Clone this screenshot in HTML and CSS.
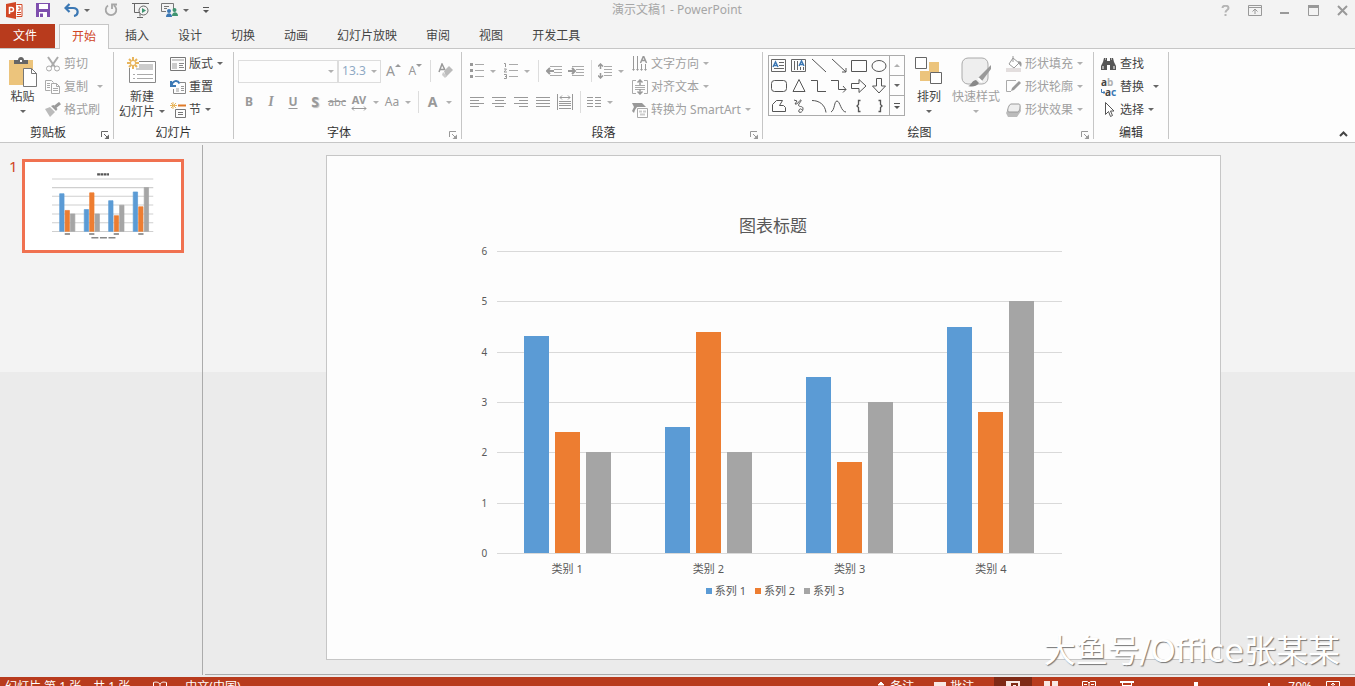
FILE: index.html
```html
<!DOCTYPE html>
<html lang="zh-CN">
<head>
  <meta charset="UTF-8" />
  <meta name="viewport" content="width=device-width, initial-scale=1.0"/>
  <title>演示文稿1 - PowerPoint</title>
  <link rel="stylesheet" href="styles.css">
</head>
<body>

  <!-- Title bar -->
  <header class="title-bar">
    <div class="quick-access">
      <svg class="logo" width="17" height="17" viewBox="0 0 17 17"><path d="M0 2l10-2v17L0 15z" fill="#d24726"/><path d="M10.500 2.500h5.500v12h-5.500" fill="#fff" stroke="#d24726"/><path d="M12 5h2v3h-2M11 10.500h4M11 12.500h4" fill="none" stroke="#d24726"/><path d="M3.500 12V5.500h2a1.800 1.800 0 010 4h-2" fill="none" stroke="#fff" stroke-width="1.500"/></svg>
      <button class="save" aria-label="保存"><svg width="14" height="14" viewBox="0 0 14 14"><path d="M0 0h14v14H0z" fill="#7e4fae"/><path d="M3 1h9v5H3zM3 9h8v5H3z" fill="#fff"/><path d="M4 10.500h3V14H4z" fill="#7e4fae"/></svg></button>
      <button class="undo" aria-label="撤消"><svg width="15" height="14" viewBox="0 0 15 14"><path d="M5.500 1L1.500 5l4 4M2 5h7c6 0 6 7 1 8" fill="none" stroke="#3c78b4" stroke-width="2.200"/></svg><i class="arrow dark"></i></button>
      <button class="redo" aria-label="重复"><svg width="14" height="14" viewBox="0 0 14 14"><path d="M4 2.500a5.300 5.300 0 106 0M8 6V1.500h5" fill="none" stroke="#a6a6a6" stroke-width="1.800"/></svg></button>
      <button class="show" aria-label="从头开始"><svg width="18" height="17" viewBox="0 0 18 17"><path d="M0 1.500h17M2.500 2v8.500H8M8 10.500v4M5 15.500h6" fill="none" stroke="#666"/><circle cx="11.500" cy="8.500" r="4.500" fill="#f3f3f3" stroke="#666"/><path d="M10 6l4 2.500-4 2.500z" fill="#3f9470"/></svg></button>
      <button class="share" aria-label="联机演示"><svg width="17" height="16" viewBox="0 0 17 16"><path d="M.5 1.500h12v6M.5 1.500v8H5M3 4.500h5M3 6.500h3" fill="none" stroke="#777"/><circle cx="8" cy="9" r="2" fill="#3c78b4"/><path d="M5 15c0-5 6-5 6 0z" fill="#3c78b4"/><circle cx="13.500" cy="8" r="2" fill="#3f9470"/><path d="M11 14c0-5 6-5 6 0z" fill="#3f9470"/></svg><i class="arrow dark"></i></button>
      <button class="more" aria-label="自定义快速访问工具栏"><svg width="8" height="8" viewBox="0 0 8 8"><path d="M1 1.500h6" stroke="#555"/><path d="M1 4h6L4 7z" fill="#555"/></svg></button>
    </div>
    <div class="doc-name">演示文稿1 - PowerPoint</div>
    <div class="window-buttons">
      <button aria-label="帮助"><svg width="9" height="11" viewBox="0 0 9 11"><path d="M1.500 3c0-3 6-3 6 0 0 2-3 2-3 4.500M4.500 9v2" fill="none" stroke="#b5b5b5" stroke-width="2"/></svg></button>
      <button aria-label="功能区显示选项"><svg width="14" height="11" viewBox="0 0 14 11"><path d="M.5.5h13v10H.5zM0 2.500h14M7 9V4.500M4.500 6.500L7 4l2.500 2.500" fill="none" stroke="#999"/></svg></button>
      <button aria-label="最小化"><svg width="10" height="11" viewBox="0 0 10 11"><path d="M0 8h9" stroke="#999" stroke-width="2"/></svg></button>
      <button aria-label="还原"><svg width="11" height="11" viewBox="0 0 11 11"><path d="M.5.5h10v10H.5z" fill="none" stroke="#999"/><path d="M0 1.500h11" stroke="#999" stroke-width="3"/></svg></button>
      <button aria-label="关闭"><svg width="11" height="11" viewBox="0 0 11 11"><path d="M1 1l9 9M10 1l-9 9" stroke="#999" stroke-width="2"/></svg></button>
    </div>
  </header>

  <!-- Tabs -->
  <nav class="tabs">
    <button class="tab file">文件</button>
    <button class="tab active">开始</button>
    <button class="tab">插入</button>
    <button class="tab">设计</button>
    <button class="tab">切换</button>
    <button class="tab">动画</button>
    <button class="tab">幻灯片放映</button>
    <button class="tab">审阅</button>
    <button class="tab">视图</button>
    <button class="tab">开发工具</button>
  </nav>

  <!-- Ribbon -->
  <div class="ribbon">
    <section class="group clipboard">
      <div class="group-body">
        <button class="big">
          <svg width="28" height="30" viewBox="0 0 28 30"><path d="M0 3h24v25H0z" fill="#ecc47c"/><path d="M5 7V3h4c0-4 6-4 6 0h4v4z" fill="#666"/><path d="M11 3h2v2h-2z" fill="#fff"/><path d="M14.500 11.500h8l5 5v13h-13z" fill="#fff" stroke="#777"/><path d="M22.500 11.500v5h5" fill="none" stroke="#777"/></svg>
          <span>粘贴</span><i class="arrow dark"></i>
        </button>
        <div class="stack">
          <button class="row off"><svg width="16" height="16" viewBox="0 0 16 16"><path d="M3 1l7 10M13 1L6 11" fill="none" stroke="#aaa" stroke-width="2"/><circle cx="4" cy="12.500" r="2.500" fill="none" stroke="#aaa"/><circle cx="12" cy="12.500" r="2.500" fill="none" stroke="#aaa"/></svg>剪切</button>
          <button class="row off copy"><svg width="16" height="16" viewBox="0 0 16 16"><path d="M5.500 11.500h-5v-10h6l2 2M2 4.500h3M2 6.500h3M2 8.500h3M6.500 4.500h5l3 3v7h-8zM11.500 4.500v3h3M8 9.500h5M8 11.500h5" fill="none" stroke="#aaa"/></svg>复制<i class="arrow"></i></button>
          <button class="row off"><svg width="16" height="16" viewBox="0 0 16 16"><path d="M0 7l5-2 5 5-5 5z" fill="#bbb"/><path d="M6 4l5 5 1.500-2L8.500 3z" fill="#999"/><path d="M10 5l5-4" stroke="#999" stroke-width="3"/></svg>格式刷</button>
        </div>
      </div>
      <div class="group-label"><span>剪贴板</span><button class="launcher dark" aria-label="剪贴板窗格"><svg width="8" height="8" viewBox="0 0 8 8"><path d="M.5 6V.5H7M3 3l3 3" fill="none" stroke="currentColor"/><path d="M8 3.500V8H3.500z" fill="currentColor"/></svg></button></div>
    </section>

    <section class="group slides">
      <div class="group-body">
        <button class="big">
          <svg width="30" height="30" viewBox="0 0 30 30"><path d="M2.500 4.500h26v21h-26z" fill="#fff" stroke="#888"/><path d="M9 7h17v6H9z" fill="#ccc"/><path d="M6 17.500h2M10 17.500h16M6 21.500h2M10 21.500h16" stroke="#aaa"/><path d="M0 0h12v11H0z" fill="#fdfdfd"/><path d="M6 0v12M0 6h12M2 2l8 8M10 2l-8 8" stroke="#e8b55c" stroke-width="2"/><circle cx="6" cy="6" r="2" fill="#fff"/></svg>
          <span>新建<br>幻灯片<i class="arrow dark"></i></span>
        </button>
        <div class="stack">
          <button class="row"><svg width="16" height="16" viewBox="0 0 16 16"><path d="M.5 1.500h15v13H.5z" fill="none" stroke="#777"/><path d="M2 3h12v2H2zM2 7h5v6H2z" fill="#ccc"/><path d="M9 7.500h5M9 9.500h4M9 11.500h5" stroke="#888"/></svg>版式<i class="arrow dark"></i></button>
          <button class="row"><svg width="16" height="16" viewBox="0 0 16 16"><path d="M10 3.500h5.500v11h-12V10" fill="none" stroke="#888"/><path d="M6 9h3v4H6z" fill="#ccc"/><path d="M11 7.500h3M11 9.500h3M11 11.500h3" stroke="#999"/><path d="M1 2v5h5M1.500 6.500c1-5 6-6 8-2" fill="none" stroke="#3c78b4" stroke-width="2"/></svg>重置</button>
          <button class="row"><svg width="16" height="16" viewBox="0 0 16 16"><path d="M3 0v7M0 3.500h7M1 1l5 5M6 1L1 6" stroke="#e8b55c"/><path d="M8 3.500h8" stroke="#e07a28" stroke-width="2"/><path d="M5.500 7.500h10v8h-10zM8 10.500h5M8 12.500h5" fill="none" stroke="#777"/></svg>节<i class="arrow dark"></i></button>
        </div>
      </div>
      <div class="group-label"><span>幻灯片</span></div>
    </section>

    <section class="group font">
      <div class="group-body lines">
        <div class="line">
          <label class="combo font-name"><select aria-label="字体"><option></option></select></label>
          <label class="combo font-size"><select aria-label="字号"><option>13.3</option></select></label>
          <button class="tool grow" aria-label="增大字号"><span class="lg">A</span><i class="tip up"></i></button>
          <button class="tool" aria-label="减小字号"><span>A</span><i class="tip"></i></button>
          <i class="bar"></i>
          <button class="tool" aria-label="清除格式"><svg width="16" height="16" viewBox="0 0 16 16"><path d="M1 9L4 1l3 6M2 6.500h4" fill="none" stroke="#999" stroke-width="1.500"/><path d="M6 8l5-5 4 4-7 7z" fill="#bbb"/><path d="M5 9l4 4-2 2-3-3z" fill="#ccc"/></svg></button>
        </div>
        <div class="line">
          <button class="tool"><b>B</b></button>
          <button class="tool"><b class="italic">I</b></button>
          <button class="tool"><b class="under">U</b></button>
          <button class="tool"><b class="shadow">S</b></button>
          <button class="tool"><s>abc</s></button>
          <button class="tool spacing"><span class="av">AV<svg width="16" height="5" viewBox="0 0 16 5"><path d="M1 2.500h14M3 .5l-2 2 2 2M13 .5l2 2-2 2" fill="none" stroke="#999"/></svg></span><i class="arrow"></i></button>
          <button class="tool case"><span>Aa</span><i class="arrow"></i></button>
          <i class="bar"></i>
          <button class="tool color"><b class="lg">A</b><i class="arrow"></i></button>
        </div>
      </div>
      <div class="group-label"><span>字体</span><button class="launcher" aria-label="字体设置"><svg width="8" height="8" viewBox="0 0 8 8"><path d="M.5 6V.5H7M3 3l3 3" fill="none" stroke="currentColor"/><path d="M8 3.500V8H3.500z" fill="currentColor"/></svg></button></div>
    </section>

    <section class="group paragraph">
      <div class="group-body">
        <div class="lines">
          <div class="line">
            <button class="tool list" aria-label="项目符号"><svg width="14" height="16" viewBox="0 0 14 16"><path d="M0 1.500h3M0 7.500h3M0 13.500h3" stroke="#999" stroke-width="3"/><path d="M5 1.500h9M5 7.500h9M5 13.500h9" stroke="#aaa"/></svg><i class="arrow"></i></button>
            <button class="tool list" aria-label="编号"><svg width="14" height="16" viewBox="0 0 14 16"><path d="M0 .5h1.500V4M0 6h2.500L0 9h3M0 11.500h2.500v4H0M1 13.500h1.500" fill="none" stroke="#999"/><path d="M5 1.500h9M5 7.500h9M5 13.500h9" stroke="#aaa"/></svg><i class="arrow"></i></button>
            <i class="bar"></i>
            <button class="tool" aria-label="降低列表级别"><svg width="16" height="12" viewBox="0 0 16 12"><path d="M4 1.500h12M8 4.500h8M8 7.500h8M4 10.500h12" stroke="#aaa"/><path d="M1 6h7M4 3L1 6l3 3" fill="none" stroke="#999" stroke-width="2"/></svg></button>
            <button class="tool" aria-label="提高列表级别"><svg width="16" height="12" viewBox="0 0 16 12"><path d="M4 1.500h12M8 4.500h8M8 7.500h8M4 10.500h12" stroke="#aaa"/><path d="M0 6h7M4 3l3 3-3 3" fill="none" stroke="#999" stroke-width="2"/></svg></button>
            <i class="bar"></i>
            <button class="tool list" aria-label="行距"><svg width="14" height="16" viewBox="0 0 14 16"><path d="M2.500 1v5M2.500 10v5M0 3.500L2.500 1 5 3.500M0 12.500L2.500 15 5 12.500" fill="none" stroke="#999" stroke-width="1.500"/><path d="M6 3.500h8M6 6.500h8M6 9.500h8M6 12.500h8" stroke="#aaa"/></svg><i class="arrow"></i></button>
          </div>
          <div class="line">
            <button class="tool" aria-label="左对齐"><svg width="14" height="12" viewBox="0 0 14 12"><path d="M0 1.500h14M0 4.500h9M0 7.500h14M0 10.500h9" stroke="#999"/></svg></button>
            <button class="tool" aria-label="居中"><svg width="14" height="12" viewBox="0 0 14 12"><path d="M0 1.500h14M3 4.500h9M0 7.500h14M3 10.500h9" stroke="#999"/></svg></button>
            <button class="tool" aria-label="右对齐"><svg width="14" height="12" viewBox="0 0 14 12"><path d="M0 1.500h14M5 4.500h9M0 7.500h14M5 10.500h9" stroke="#999"/></svg></button>
            <button class="tool" aria-label="两端对齐"><svg width="14" height="12" viewBox="0 0 14 12"><path d="M0 1.500h14M0 4.500h14M0 7.500h14M0 10.500h14" stroke="#999"/></svg></button>
            <button class="tool" aria-label="分散对齐"><svg width="16" height="16" viewBox="0 0 16 16"><path d="M.5 0v16M15.500 0v16M3 3.500h10M5 1.500l-2 2 2 2M11 1.500l2 2-2 2M2 7.500h12M2 9.500h12M2 11.500h12M2 14.500h12" fill="none" stroke="#999"/></svg></button>
            <i class="bar"></i>
            <button class="tool list" aria-label="分栏"><svg width="14" height="12" viewBox="0 0 14 12"><path d="M0 1.500h6M8 1.500h6M0 4.500h6M8 4.500h6M0 7.500h6M8 7.500h6M0 10.500h6M8 10.500h6" stroke="#999"/></svg><i class="arrow"></i></button>
          </div>
        </div>
        <div class="stack">
          <button class="row off"><svg width="16" height="16" viewBox="0 0 16 16"><path d="M1.500 0v14M5.500 0v14M9.500 8v6M13.500 8v6" stroke="#999"/><path d="M0 13h3l-1.500 2zM4 13h3l-1.500 2zM8 13h3l-1.500 2zM12 13h3l-1.500 2z" fill="#999"/><path d="M8.500 7L11.500 0l3 7M9.500 4.500h4" fill="none" stroke="#999" stroke-width="1.500"/></svg>文字方向<i class="arrow"></i></button>
          <button class="row off"><svg width="16" height="16" viewBox="0 0 16 16"><path d="M4 1.500H.5v13H4M12 1.500h3.500v13H12M3 6.500h10M3 8.500h10M3 10.500h10" fill="none" stroke="#aaa"/><path d="M8 1v5M8 10v5M5.500 3.500L8 1l2.500 2.500M5.500 12.500L8 15l2.500-2.500" fill="none" stroke="#999" stroke-width="1.500"/></svg>对齐文本<i class="arrow"></i></button>
          <button class="row off"><svg width="16" height="16" viewBox="0 0 16 16"><path d="M0 1h10l4 4H5L3 8l-1 3-2-2 2-4z" fill="#999"/><path d="M5.500 6.500h10v9h-10z" fill="#fff" stroke="#aaa"/><path d="M7 9.500h3M11 9.500h3M8 12.500h5" stroke="#ccc" stroke-width="2"/></svg>转换为 SmartArt<i class="arrow"></i></button>
        </div>
      </div>
      <div class="group-label"><span>段落</span><button class="launcher" aria-label="段落设置"><svg width="8" height="8" viewBox="0 0 8 8"><path d="M.5 6V.5H7M3 3l3 3" fill="none" stroke="currentColor"/><path d="M8 3.500V8H3.500z" fill="currentColor"/></svg></button></div>
    </section>

    <section class="group drawing">
      <div class="group-body">
        <div class="gallery">
          <div class="shapes">
            <button aria-label="文本框"><svg width="16" height="16" viewBox="0 0 16 16"><path d="M.5 1.500h14v12H.5zM8 4.500h5M8 7.500h5M3 10.500h10" fill="none" stroke="#666"/><path d="M2 9l2.500-5L7 9M3 7.500h3" fill="none" stroke="#3c78b4" stroke-width="1.500"/></svg></button>
            <button aria-label="竖排文本框"><svg width="16" height="16" viewBox="0 0 16 16"><path d="M.5 1.500h14v12H.5zM3.500 3v9M6.500 3v9M9.500 9v3M12.500 9v3" fill="none" stroke="#666"/><path d="M8 8l2.500-5L13 8M9 6.500h3" fill="none" stroke="#3c78b4" stroke-width="1.500"/></svg></button>
            <button aria-label="直线"><svg width="16" height="16" viewBox="0 0 16 16"><path d="M1 1l14 13" stroke="#555"/></svg></button>
            <button aria-label="箭头"><svg width="16" height="16" viewBox="0 0 16 16"><path d="M1 1l14 13M15 10v4h-4" fill="none" stroke="#555"/></svg></button>
            <button aria-label="矩形"><svg width="16" height="16" viewBox="0 0 16 16"><path d="M.5 2.500h15v11H.5z" fill="none" stroke="#555"/></svg></button>
            <button aria-label="椭圆"><svg width="16" height="16" viewBox="0 0 16 16"><ellipse cx="8" cy="8" rx="7" ry="5.500" fill="none" stroke="#555"/></svg></button>
            <button aria-label="圆角矩形"><svg width="16" height="16" viewBox="0 0 16 16"><rect x=".5" y="2.500" width="15" height="11" rx="3" fill="none" stroke="#555"/></svg></button>
            <button aria-label="三角形"><svg width="16" height="16" viewBox="0 0 16 16"><path d="M8 1.500l6 12H2z" fill="none" stroke="#555"/></svg></button>
            <button aria-label="肘形连接符"><svg width="16" height="16" viewBox="0 0 16 16"><path d="M0 2.500h6.500v11H15" fill="none" stroke="#555"/></svg></button>
            <button aria-label="肘形箭头"><svg width="16" height="16" viewBox="0 0 16 16"><path d="M0 2.500h7.500v9H15M12 8l3 3.500-3 3" fill="none" stroke="#555"/></svg></button>
            <button aria-label="右箭头"><svg width="16" height="16" viewBox="0 0 16 16"><path d="M.5 5.500H8v-4l7 6.500-7 6.500v-4H.5z" fill="none" stroke="#555"/></svg></button>
            <button aria-label="下箭头"><svg width="16" height="16" viewBox="0 0 16 16"><path d="M5.500.5V8h-4L8 15l6.500-7h-4V.5z" fill="none" stroke="#555"/></svg></button>
            <button aria-label="任意多边形"><svg width="16" height="16" viewBox="0 0 16 16"><path d="M1.500 6.500l4-4h6l-3 5h4l2 2v4h-13z" fill="none" stroke="#555"/></svg></button>
            <button aria-label="自由曲线"><svg width="16" height="16" viewBox="0 0 16 16"><path d="M3 2l3 1-2 3c3 1 5-5 6-4s-4 5-2 6 4 0 4 3-3 4-4 3 1-5 3-2" fill="none" stroke="#555"/></svg></button>
            <button aria-label="弧形"><svg width="16" height="16" viewBox="0 0 16 16"><path d="M1 2.500c7 0 13 4 14 12" fill="none" stroke="#555"/></svg></button>
            <button aria-label="曲线"><svg width="16" height="16" viewBox="0 0 16 16"><path d="M0 14C4 12 3 3 6 3s4 11 9 11" fill="none" stroke="#555"/></svg></button>
            <button aria-label="左大括号"><svg width="16" height="16" viewBox="0 0 16 16"><path d="M9.500 2.500h-2v4L6 8l1.500 1.500v4h2" fill="none" stroke="#555" stroke-width="1.300"/></svg></button>
            <button aria-label="右大括号"><svg width="16" height="16" viewBox="0 0 16 16"><path d="M7.500 2.500h2v4L11 8 9.500 9.500v4h-2" fill="none" stroke="#555" stroke-width="1.300"/></svg></button>
          </div>
          <div class="gallery-scroll">
            <button aria-label="上一行"><i class="arrow up"></i></button>
            <button aria-label="下一行"><i class="arrow dark"></i></button>
            <button aria-label="其他"><svg width="8" height="8" viewBox="0 0 8 8"><path d="M1 1.500h6" stroke="#555"/><path d="M1 4h6L4 7z" fill="#555"/></svg></button>
          </div>
        </div>
        <button class="big arrange">
          <svg width="28" height="30" viewBox="0 0 28 30"><path d="M14 5h10v10H14zM5 14h10v10H5z" fill="#ecc47c"/><path d="M.5.500h11v11H.5zM15.500 15.500h11v11h-11z" fill="#fff" stroke="#666"/></svg>
          <span>排列</span><i class="arrow dark"></i>
        </button>
        <button class="big off">
          <svg width="30" height="30" viewBox="0 0 30 30"><rect x="1" y="1" width="26" height="26" rx="6" fill="#eee" stroke="#aaa"/><path d="M30 8L17 21l4 3 9-12z" fill="#999"/><path d="M7 29c3 0 3-5 8-6l3 3c-3 4-7 4-11 3z" fill="#888"/><path d="M17 21l4 4" stroke="#fff" stroke-width="2"/></svg>
          <span>快速样式</span><i class="arrow"></i>
        </button>
        <div class="stack">
          <button class="row off"><svg width="16" height="16" viewBox="0 0 16 16"><path d="M0 12h15v4H0z" fill="#e3dede"/><path d="M7 2l6 5-5 5-5-4zM7 6V0" fill="#fff" stroke="#999"/><path d="M12 5c4 0 4 3 3 6l-2-3z" fill="#999"/></svg>形状填充<i class="arrow"></i></button>
          <button class="row off"><svg width="16" height="16" viewBox="0 0 16 16"><path d="M10 1.500H.5v11H5" fill="none" stroke="#aaa"/><path d="M5 12l1-3 7-7 2 2-7 7z" fill="#999"/></svg>形状轮廓<i class="arrow"></i></button>
          <button class="row off"><svg width="16" height="16" viewBox="0 0 16 16"><path d="M4 3h10l1 6-4 6H2l-2-4z" fill="#bbb"/><path d="M5 2h8c2 0 1 7-1 8H3C0 10 3 2 5 2z" fill="#eee" stroke="#999"/></svg>形状效果<i class="arrow"></i></button>
        </div>
      </div>
      <div class="group-label"><span>绘图</span><button class="launcher" aria-label="形状格式"><svg width="8" height="8" viewBox="0 0 8 8"><path d="M.5 6V.5H7M3 3l3 3" fill="none" stroke="currentColor"/><path d="M8 3.500V8H3.500z" fill="currentColor"/></svg></button></div>
    </section>

    <section class="group editing">
      <div class="group-body">
        <div class="stack">
          <button class="row"><svg width="16" height="16" viewBox="0 0 16 16"><path d="M3 2h3v3h3V2h3l1 4 2 4v4H9V9H6v5H0v-4l2-4z" fill="#555"/><path d="M2 10v3M13 10v3M4 3h1M10 3h1" stroke="#fff"/></svg>查找</button>
          <button class="row replace"><span class="abac"><b>a<em>b</em></b><b><svg width="4" height="6" viewBox="0 0 4 6"><path d="M.5 0v3.500H4M2.500 2L4 3.500 2.500 5" fill="none" stroke="#3c78b4"/></svg>a<em class="blue">c</em></b></span>替换<i class="arrow dark"></i></button>
          <button class="row"><svg width="16" height="16" viewBox="0 0 16 16"><path d="M4.500.5v12l3-3 2 5 2-1-2-4.500h3.500z" fill="#fff" stroke="#555"/></svg>选择<i class="arrow dark"></i></button>
        </div>
      </div>
      <div class="group-label"><span>编辑</span></div>
    </section>

    <button class="collapse" aria-label="折叠功能区"><svg width="9" height="6" viewBox="0 0 9 6"><path d="M1 5l3.500-3.500L8 5" fill="none" stroke="#444" stroke-width="2"/></svg></button>
  </div>

  <!-- Workspace -->
  <main class="workspace">
    <aside class="slide-list">
      <span class="slide-number">1</span>
      <div class="thumb">
        <svg viewBox="0 0 895 505">
          <path d="M155 97h581M155 147h581M155 197h581M155 247h581M155 298h581M155 348h581M155 399h581" stroke="#cfcfcf" stroke-width="6"/>
          <path d="M199 182h25v216h-25zM340 273h25v125h-25zM480 222h25v176h-25zM621 172h25v226h-25z" fill="#5b9bd5" stroke="#5b9bd5" stroke-width="4"/>
          <path d="M230 278h25v120h-25zM371 177h25v221h-25zM512 308h25v90h-25zM652 257h25v141h-25z" fill="#ed7d31" stroke="#ed7d31" stroke-width="4"/>
          <path d="M261 298h25v100h-25zM402 298h25v100h-25zM543 248h25v150h-25zM684 147h25v251h-25z" fill="#a5a5a5" stroke="#a5a5a5" stroke-width="4"/>
          <path d="M414 71h68" stroke="#555" stroke-width="12" stroke-dasharray="16 3"/>
          <path d="M228 413h30M368 413h30M509 413h30M650 413h30" stroke="#777" stroke-width="9"/>
          <path d="M381 435h40M430 435h40M479 435h40" stroke="#888" stroke-width="9"/>
        </svg>
      </div>
    </aside>

    <div class="stage">
      <div class="slide">
        <div class="chart-title">图表标题</div>
        <div class="chart">
          <div class="axis"><span>6</span><span>5</span><span>4</span><span>3</span><span>2</span><span>1</span><span>0</span></div>
          <div class="plot">
            <div class="grid-lines"><i></i><i></i><i></i><i></i><i></i><i></i><i></i></div>
            <div class="bars"><i class="s1" style="height:71.7%"></i><i class="s2" style="height:40%"></i><i class="s3" style="height:33.3%"></i></div>
            <div class="bars"><i class="s1" style="height:41.7%"></i><i class="s2" style="height:73.3%"></i><i class="s3" style="height:33.3%"></i></div>
            <div class="bars"><i class="s1" style="height:58.3%"></i><i class="s2" style="height:30%"></i><i class="s3" style="height:50%"></i></div>
            <div class="bars"><i class="s1" style="height:75%"></i><i class="s2" style="height:46.7%"></i><i class="s3" style="height:83.3%"></i></div>
          </div>
        </div>
        <div class="categories"><span>类别 1</span><span>类别 2</span><span>类别 3</span><span>类别 4</span></div>
        <div class="legend">
          <span><i class="s1"></i>系列 1</span>
          <span><i class="s2"></i>系列 2</span>
          <span><i class="s3"></i>系列 3</span>
        </div>
      </div>
    </div>

    <div class="watermark">大鱼号/Office张某某</div>
  </main>

  <!-- Status bar -->
  <footer class="status-bar">
    <span class="page-info">幻灯片 第 1 张，共 1 张</span>
    <svg class="spell" width="16" height="14" viewBox="0 0 16 14"><path d="M8 3v10M8 3C6 .5 3 1 1.500 1.500v10C4 11 6 11 8 13c2-2 4-2 6.500-1.500v-10C12 1 10 .5 8 3z" fill="none" stroke="#fff"/></svg>
    <span class="language">中文(中国)</span>
    <button class="notes"><svg width="10" height="14" viewBox="0 0 10 14"><path d="M2 4l3-3 3 3zM1 8.500h8M1 11.500h8" fill="#fff" stroke="#fff"/></svg>备注</button>
    <button class="notes"><svg width="12" height="14" viewBox="0 0 12 14"><path d="M0 1h12v8H6l-3 3V9H0z" fill="#f8e8e4"/></svg>批注</button>
    <div class="views">
      <button class="on" aria-label="普通视图"><svg width="14" height="14" viewBox="0 0 14 14"><path d="M0 0h14v13H0z" fill="#f8e8e4"/><path d="M5 2h7v6H5z" fill="#7f2a16"/><path d="M7 4h3v4H7z" fill="#f8e8e4"/></svg></button>
      <button aria-label="幻灯片浏览"><svg width="14" height="14" viewBox="0 0 14 14"><path d="M0 0h6v6H0zM8 0h6v6H8zM0 8h6v6H0zM8 8h6v6H8z" fill="#f8e8e4"/></svg></button>
      <button aria-label="阅读视图"><svg width="14" height="14" viewBox="0 0 14 14"><path d="M7 1.500v11M.5.500h5L7 2 8.500.500h5v11h-5L7 13l-1.500-1.500h-5zM2 3.500h3M9 3.500h3M2 6.500h3M9 6.500h3" fill="none" stroke="#fff"/></svg></button>
      <button aria-label="幻灯片放映"><svg width="14" height="14" viewBox="0 0 14 14"><path d="M0 1h14" stroke="#fff" stroke-width="2"/><path d="M2.500 2v6h9V2M7 8v5M4 13h6M2 4.500h10" fill="none" stroke="#fff"/></svg></button>
    </div>
    <input class="zoom" type="range" min="10" max="200" value="85" aria-label="缩放">
    <svg class="plus" width="10" height="14" viewBox="0 0 10 14"><path d="M5 2v9M0 6.500h10" stroke="#fff" stroke-width="2"/></svg>
    <span class="percent">70%</span>
    <button class="fit" aria-label="使幻灯片适应当前窗口"><svg width="14" height="14" viewBox="0 0 14 14"><path d="M.5.500h13v12H.5zM7 2v9M5 4l2-2 2 2M3 6.500h8" fill="none" stroke="#fff"/></svg></button>
  </footer>

</body>
</html>
```
FILE: styles.css
```css
* {
  box-sizing: border-box;
}

html, body {
  overflow: hidden;
}

body {
  margin: 0;
  height: 100vh;
  display: flex;
  flex-direction: column;
  background: #f3f3f3;
  color: #444;
  font: 12px/16px "Noto Sans", "Noto Sans CJK SC", sans-serif;
  white-space: nowrap;
}

button {
  display: flex;
  align-items: center;
  justify-content: center;
  padding: 0;
  border: none;
  background: none;
  color: inherit;
  font: inherit;
}

svg {
  display: block;
  flex: none;
}

.arrow {
  flex: none;
  border: 3px solid transparent;
  border-top-color: #b0b0b0;
  border-bottom: none;
}

.arrow.dark {
  border-top-color: #666;
}

.arrow.up {
  border-top: none;
  border-bottom: 3px solid #b0b0b0;
}

/* title bar */
.title-bar {
  flex: none;
  height: 24px;
  display: grid;
  grid-template-columns: 1fr auto 1fr;
  padding: 0 7px 4px 6px;
}

.quick-access, .window-buttons {
  display: flex;
  align-items: center;
}

.quick-access .arrow {
  margin-left: 5px;
}

.save {
  margin-left: 13px;
}

.undo, .redo, .show {
  margin-left: 14px;
}

.share {
  margin-left: 11px;
}

.more {
  margin-left: 13px;
}

.doc-name {
  color: #a6a6a6;
  line-height: 20px;
}

.window-buttons {
  justify-content: flex-end;
  gap: 18px;
}

/* tabs */
.tabs {
  flex: none;
  height: 24px;
  display: flex;
  gap: 1px;
}

.tab {
  padding: 0 14px;
}

.tab.file {
  width: 55px;
  padding: 0 18px 0 13px;
  background: #b83b1d;
  color: #fff;
}

.tab.active {
  height: 25px;
  margin: 0 1px 0 3px;
  padding: 0 12px;
  border: 1px solid #c6c6c6;
  border-bottom: none;
  background: #fdfdfd;
  color: #d04525;
  z-index: 1;
}

/* ribbon */
.ribbon {
  flex: none;
  height: 95px;
  display: flex;
  padding-top: 3px;
  background: #fdfdfd;
  border-top: 1px solid #c6c6c6;
  border-bottom: 1px solid #c6c6c6;
}

.group {
  flex: none;
  height: 87px;
  display: flex;
  flex-direction: column;
  border-right: 1px solid #c6c6c6;
}

.group-body {
  flex: none;
  height: 69px;
  display: flex;
}

.group-label {
  display: flex;
  align-items: center;
  height: 18px;
  padding-top: 5px;
  color: #333;
}

.group-label span {
  flex: 1;
  text-align: center;
}

.launcher {
  width: 17px;
  padding-top: 4px;
  color: #999;
}

.launcher.dark {
  color: #666;
}

.clipboard {
  width: 114px;
}

.slides {
  width: 120px;
}

.font {
  width: 228px;
}

.paragraph {
  width: 301px;
}

.drawing {
  width: 331px;
}

.editing {
  width: 75px;
}

.big {
  flex-direction: column;
  justify-content: flex-start;
  padding-top: 5px;
}

.big span {
  margin-top: 2px;
}

.big > .arrow {
  margin-top: 5px;
}

.big span .arrow {
  display: inline-block;
  margin-left: 4px;
  vertical-align: 3px;
}

.row {
  height: 23px;
  gap: 3px;
  justify-content: flex-start;
}

.row .arrow {
  margin-left: 1px;
}

.row.off, .big.off {
  color: #a0a0a0;
}

.clipboard .big {
  width: 45px;
}

.copy .arrow, .replace .arrow {
  margin-left: 6px;
}

.slides .big {
  width: 56px;
}

.slides .big span {
  line-height: 15px;
}

/* font and paragraph tools */
.lines {
  display: flex;
  flex-direction: column;
  gap: 9px;
  padding-top: 8px;
}

.line {
  display: flex;
  align-items: center;
  height: 22px;
}

.tool {
  width: 22px;
  height: 22px;
  color: #999;
}

.tool .arrow {
  margin-left: 6px;
}

.bar {
  width: 1px;
  height: 22px;
  margin: 0 4px;
  background: #ddd;
}

.lg {
  font-size: 14px;
}

.font .lines {
  padding-left: 4px;
}

.font .line {
  padding-right: 4px;
}

.combo {
  position: relative;
  height: 23px;
}

.combo::after {
  content: "";
  position: absolute;
  right: 4px;
  top: 10px;
  border: 3px solid transparent;
  border-top-color: #b0b0b0;
  border-bottom: none;
}

.combo select {
  appearance: none;
  width: 100%;
  height: 23px;
  padding: 0 3px;
  border: 1px solid #ddd;
  border-radius: 0;
  background: #fdfdfd;
  color: #8fa9c4;
  font: inherit;
}

.font-name {
  width: 101px;
}

.font-size {
  width: 43px;
}

.grow {
  margin-left: 2px;
}

.tip {
  align-self: flex-start;
  margin-top: 4px;
  border: 3px solid transparent;
  border-top-color: #999;
  border-bottom: none;
}

.tip.up {
  border-top: none;
  border-bottom: 3px solid #999;
}

.italic {
  font-family: "Liberation Serif", serif;
  font-size: 14px;
  font-style: italic;
}

.under {
  text-decoration: underline;
  text-underline-offset: 2px;
}

.shadow {
  font-size: 14px;
  text-shadow: 1px 1px 1px #bbb;
}

.tool s {
  font-size: 11px;
}

.tool.spacing {
  width: 34px;
}

.av {
  font-size: 11px;
  font-weight: bold;
  line-height: 12px;
}

.tool.case {
  width: 32px;
}

.tool.color {
  width: 34px;
}

.tool.color .arrow {
  margin-left: 9px;
}

.paragraph .lines {
  width: 168px;
  padding-left: 4px;
}

.tool.list {
  width: 34px;
}

.tool.list .arrow {
  margin-left: 6px;
}

.bar + .tool.list {
  width: 30px;
}

.paragraph .stack {
  padding-left: 2px;
}

/* drawing */
.drawing .group-body {
  padding-left: 5px;
}

.gallery {
  display: flex;
  height: 61px;
  margin: 3px 4px 0 0;
  border: 1px solid #ababab;
}

.shapes {
  display: grid;
  grid-template-columns: repeat(6, 20px);
  grid-template-rows: repeat(3, 20px);
}

.gallery-scroll {
  width: 15px;
  display: flex;
  flex-direction: column;
  border-left: 1px solid #ababab;
}

.gallery-scroll button {
  flex: 1;
}

.gallery-scroll button + button {
  border-top: 1px solid #ababab;
}

.arrange {
  width: 40px;
}

.drawing .big.off {
  width: 54px;
}

.drawing .stack {
  padding-left: 3px;
}

.editing .stack {
  padding-left: 7px;
}

.abac {
  width: 16px;
}

.abac b {
  display: flex;
  align-items: center;
  font-size: 10px;
  line-height: 10px;
}

.abac em {
  color: #b0b0b0;
  font-style: normal;
}

.abac .blue {
  color: #3c78b4;
}

.collapse {
  margin: auto 7px 5px auto;
}

/* workspace */
.workspace {
  flex: 1;
  min-height: 0;
  display: flex;
  position: relative;
  background: linear-gradient(#f3f3f3 229px, #ebebeb 229px);
}

.slide-list {
  width: 203px;
  display: flex;
  align-items: flex-start;
  margin: 2px 0;
  padding: 14px 0 0 9px;
  border-right: 1px solid #ababab;
}

.slide-number {
  width: 13px;
  color: #d04525;
  font-size: 15px;
  line-height: 14px;
}

.thumb {
  width: 162px;
  border: 3px solid #f07150;
  background: #fff;
}

.stage {
  flex: 1;
  display: flex;
  justify-content: center;
  margin: 0 0 2px 2px;
  padding: 12px 14px 14px 0;
  border-bottom: 1px solid #ababab;
}

.slide {
  aspect-ratio: 895 / 505;
  display: flex;
  flex-direction: column;
  padding: 60px 151px;
  border: 1px solid #c6c6c6;
  background: #fdfdfd;
  color: #595959;
}

.chart-title {
  font-size: 17px;
  line-height: 20px;
  text-align: center;
}

.chart {
  flex: 1;
  display: flex;
  margin-top: 15px;
  padding-right: 7px;
}

.axis {
  width: 19px;
  display: flex;
  flex-direction: column;
  justify-content: space-between;
  padding-left: 4px;
  font-size: 10px;
}

.axis span {
  height: 1px;
  line-height: 1px;
}

.plot {
  flex: 1;
  display: flex;
  position: relative;
}

.grid-lines {
  position: absolute;
  inset: 0;
  display: flex;
  flex-direction: column;
  justify-content: space-between;
}

.grid-lines i {
  height: 1px;
  background: #d9d9d9;
}

.bars {
  flex: 1;
  display: flex;
  align-items: flex-end;
  justify-content: center;
  gap: 6px;
  padding-bottom: 1px;
  z-index: 1;
}

.bars i {
  width: 25px;
}

.s1 {
  background: #5b9bd5;
}

.s2 {
  background: #ed7d31;
}

.s3 {
  background: #a5a5a5;
}

.categories {
  display: flex;
  margin-top: 7px;
  padding: 0 7px 0 19px;
  font-size: 11px;
}

.categories span {
  flex: 1;
  text-align: center;
}

.legend {
  display: flex;
  justify-content: center;
  gap: 9px;
  margin-top: 6px;
  padding-left: 4px;
  font-size: 11px;
}

.legend span {
  display: flex;
  align-items: center;
  gap: 3px;
}

.legend i {
  width: 6px;
  height: 6px;
}

.watermark {
  position: absolute;
  right: 15px;
  bottom: 6px;
  color: #fff;
  font-family: "DejaVu Sans", "Noto Sans CJK SC", sans-serif;
  font-size: 32px;
  line-height: 40px;
  text-shadow: 1px 1px 1px #777;
}

/* status bar, mostly below the window edge */
.status-bar {
  flex: none;
  height: 9px;
  display: flex;
  align-items: flex-start;
  padding: 0 15px 0 5px;
  overflow: hidden;
  background: #b83b1d;
  color: #fff;
  line-height: 20px;
}

.status-bar svg {
  margin-top: 4px;
}

.spell {
  margin-left: 22px;
}

.language {
  margin: 0 auto 0 17px;
}

.notes {
  align-items: flex-start;
  gap: 4px;
  margin-right: 20px;
}

.views {
  display: flex;
}

.views button {
  width: 38px;
  height: 20px;
  align-items: flex-start;
}

.views .on {
  background: #7f2a16;
}

.zoom {
  appearance: none;
  width: 100px;
  height: 20px;
  margin: 0 8px 0 10px;
  background: none;
}

.zoom::-webkit-slider-thumb {
  appearance: none;
  width: 4px;
  height: 10px;
  background: #fff;
}

.percent {
  margin: 0 14px 0 14px;
}
```
